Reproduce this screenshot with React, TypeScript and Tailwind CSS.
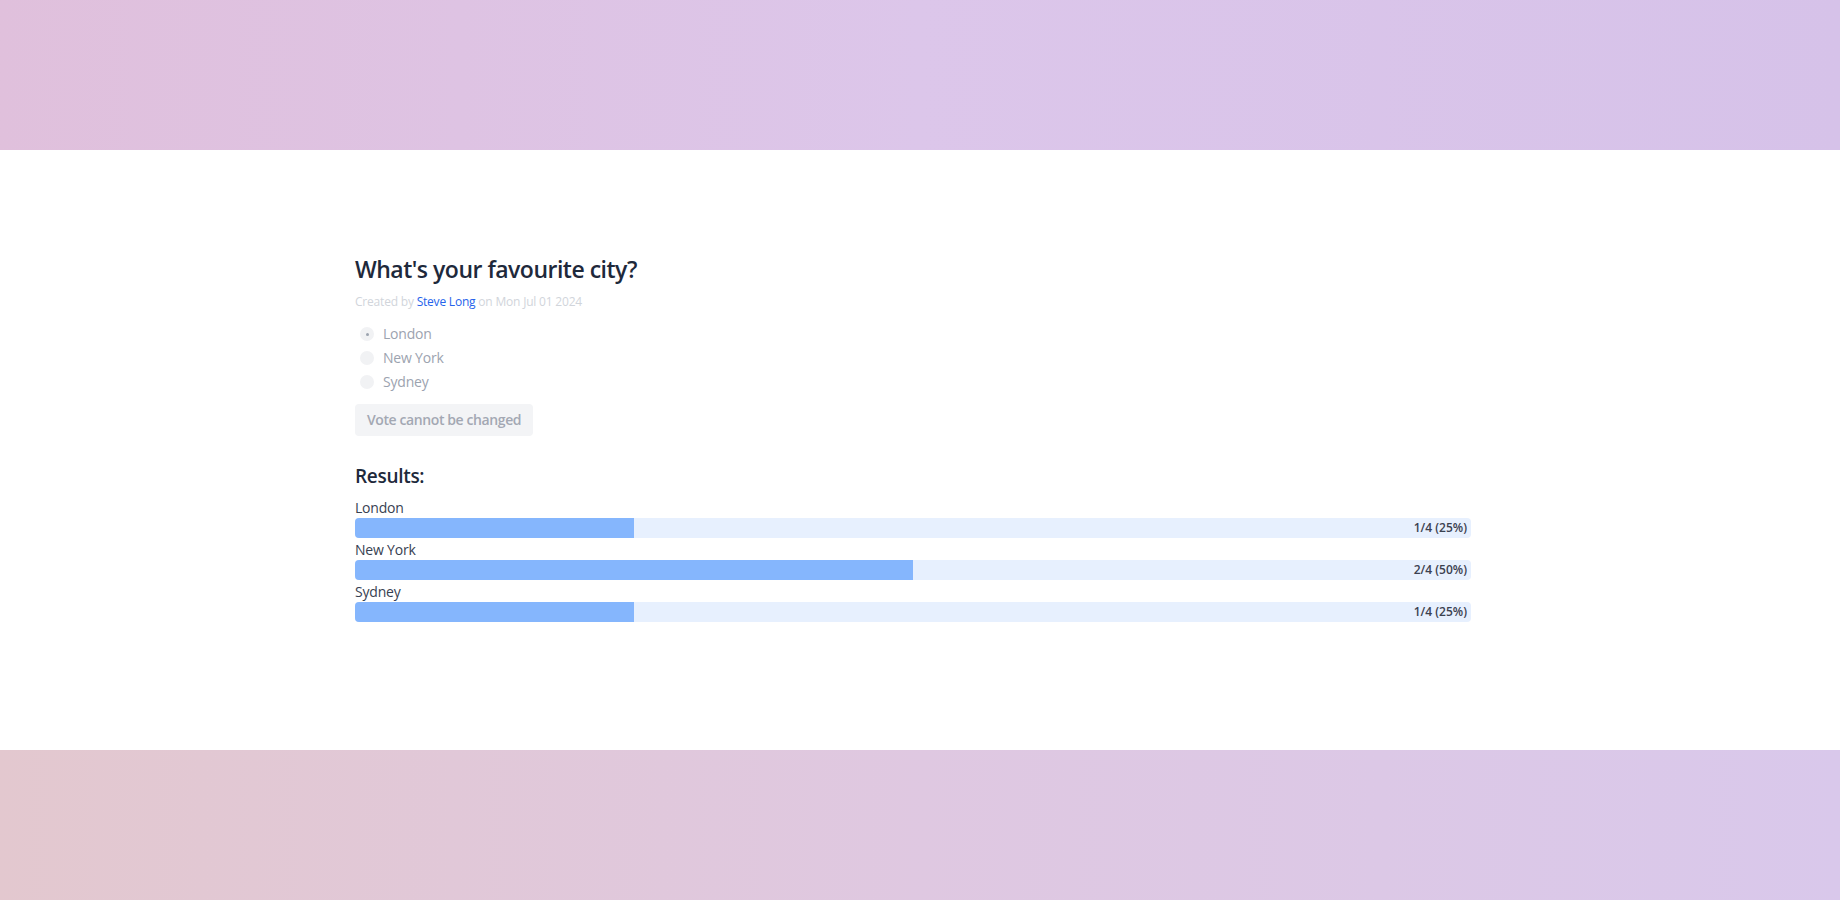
import React from "react";

const options = ["London", "New York", "Sydney"];

const results = [
  { name: "London", votes: 1 },
  { name: "New York", votes: 2 },
  { name: "Sydney", votes: 1 },
];
const total = 4;

const Poll = () => {
  return (
    <div className="ml-[355px] w-[1116px] pt-[103px]">
      <h1 className="text-[23px] leading-8 font-semibold tracking-[-0.5px] text-[#1e293b]">
        What's your favourite city?
      </h1>
      <p className="mt-[9px] text-xs tracking-[-0.2px] text-[#d1d5db]">
        Created by <span className="text-[#2563eb]">Steve Long</span> on Mon Jul 01 2024
      </p>
      <div className="mt-3">
        {options.map((opt, i) => (
          <label key={opt} className="flex h-6 items-center">
            <span className="ml-[5px] flex h-[14px] w-[14px] items-center justify-center rounded-full bg-[#f1f2f4]">
              {i === 0 ? <span className="h-[3px] w-[3px] rounded-full bg-[#9ca3af]" /> : null}
            </span>
            <span className="ml-[9px] text-sm tracking-[-0.2px] text-[#9ca3af]">{opt}</span>
          </label>
        ))}
      </div>
      <button className="mt-[10px] h-8 rounded bg-[#f3f4f6] px-3 text-sm font-semibold tracking-[-0.4px] text-[#a3a8b3]">
        Vote cannot be changed
      </button>
      <h2 className="mt-[26px] mb-2 text-[19px] leading-7 font-semibold tracking-[-0.3px] text-[#1e293b]">
        Results:
      </h2>
      {results.map((r) => {
        const pct = Math.round((r.votes / total) * 100);
        return (
          <div key={r.name} className="mb-0.5">
            <div className="text-sm tracking-[-0.2px] text-[#374151]">{r.name}</div>
            <div className="relative h-5 w-full overflow-hidden rounded-sm bg-[#e7f0fe]">
              <div className="h-full bg-[#85b6fd]" style={{ width: `${pct}%` }} />
              <span className="absolute inset-y-0 right-1 flex items-center text-xs font-semibold text-[#3b4150]">
                {r.votes}/{total} ({pct}%)
              </span>
            </div>
          </div>
        );
      })}
    </div>
  );
};

export default function App() {
  return (
    <div className="flex min-h-screen flex-col" style={{ fontFamily: '"Open Sans", "Noto Sans", sans-serif' }}>
      <div className="h-[150px] bg-gradient-to-r from-[#e0c0dc] via-[#dcc6ea] to-[#d6c2e9]" />
      <main className="h-[600px] bg-white">
        <Poll />
      </main>
      <div className="h-[150px] bg-gradient-to-r from-[#e3c8cf] via-[#dfc8e1] to-[#d9c8eb]" />
    </div>
  );
}
